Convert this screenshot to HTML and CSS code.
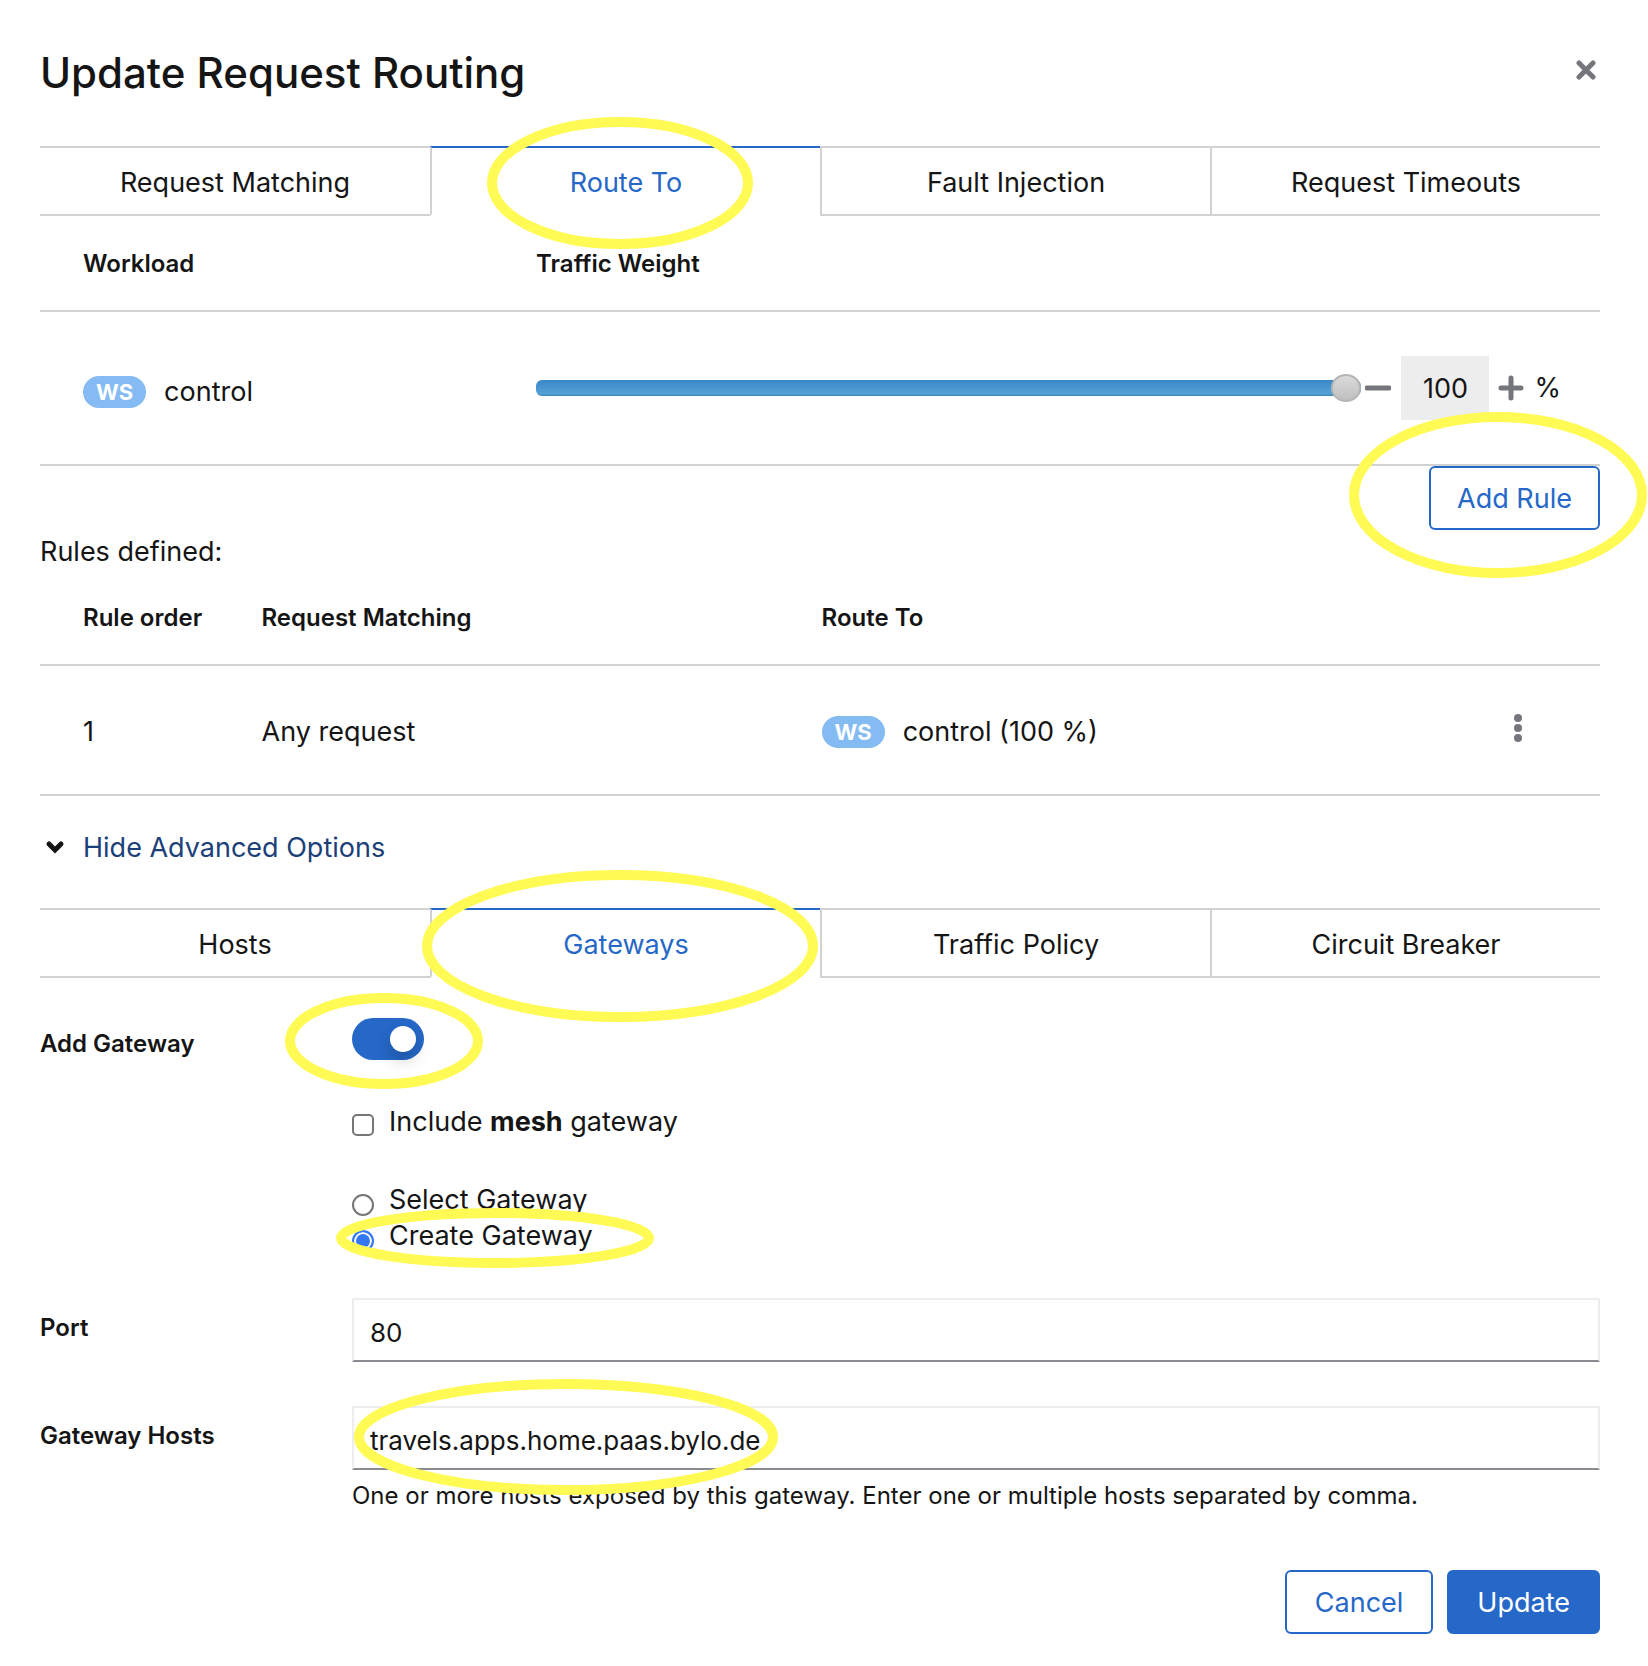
FILE: index.html
```html
<!DOCTYPE html>
<html lang="en">
<head>
<meta charset="utf-8">
<meta name="viewport" content="width=device-width, initial-scale=1">
<title>Update Request Routing</title>
<link rel="stylesheet" href="styles.css">
</head>
<body>
<main class="dialog">
  <header class="dialog-header">
    <h1 class="title">Update Request Routing</h1>
    <button class="icon-button close" type="button" aria-label="Close">
      <svg width="20" height="20" viewBox="0 0 20 20" aria-hidden="true"><path d="M3 3l14 14M17 3L3 17" stroke="currentColor" stroke-width="5" stroke-linecap="round"/></svg>
    </button>
  </header>

  <div class="tabs" role="tablist">
    <button class="tab" type="button" role="tab">Request Matching</button>
    <button class="tab active" type="button" role="tab" aria-selected="true">Route To
      <svg class="mark mark-route" width="268" height="134" aria-hidden="true"><ellipse cx="134" cy="67" rx="128" ry="61"/></svg>
    </button>
    <button class="tab" type="button" role="tab">Fault Injection</button>
    <button class="tab" type="button" role="tab">Request Timeouts</button>
  </div>

  <table class="grid weights">
    <thead>
      <tr><th class="col-workload">Workload</th><th>Traffic Weight</th></tr>
    </thead>
    <tbody>
      <tr>
        <td><span class="workload"><span class="badge">WS</span>control</span></td>
        <td>
          <div class="weight">
            <input class="slider" type="range" min="0" max="100" value="100" aria-label="Traffic weight">
            <button class="icon-button" type="button" aria-label="Decrease">
              <svg width="26" height="26" viewBox="0 0 26 26" aria-hidden="true"><path d="M2 13h22" stroke="currentColor" stroke-width="5" stroke-linecap="round"/></svg>
            </button>
            <input class="weight-value" type="text" value="100" aria-label="Weight in percent">
            <button class="icon-button" type="button" aria-label="Increase">
              <svg width="26" height="26" viewBox="0 0 26 26" aria-hidden="true"><path d="M3 13h20M13 3v20" stroke="currentColor" stroke-width="5" stroke-linecap="round"/></svg>
            </button>
            <span class="unit">%</span>
          </div>
        </td>
      </tr>
    </tbody>
  </table>

  <div class="add-row">
    <button class="button secondary add-rule" type="button">Add Rule
      <svg class="mark mark-add" width="300" height="168" aria-hidden="true"><ellipse cx="150" cy="84" rx="144" ry="78"/></svg>
    </button>
  </div>

  <p class="rules-title">Rules defined:</p>
  <table class="grid rules">
    <thead>
      <tr><th class="col-order">Rule order</th><th class="col-match">Request Matching</th><th>Route To</th><th class="col-actions"></th></tr>
    </thead>
    <tbody>
      <tr>
        <td>1</td>
        <td>Any request</td>
        <td><span class="workload"><span class="badge">WS</span>control (100 %)</span></td>
        <td>
          <button class="icon-button kebab" type="button" aria-label="Actions">
            <svg width="10" height="30" viewBox="0 0 10 30" aria-hidden="true"><circle cx="5" cy="5" r="4"/><circle cx="5" cy="15" r="4"/><circle cx="5" cy="25" r="4"/></svg>
          </button>
        </td>
      </tr>
    </tbody>
  </table>

  <button class="expander" type="button" aria-expanded="true">
    <svg width="20" height="16" viewBox="0 0 20 16" aria-hidden="true"><path d="M4 4l6 6 6-6" fill="none" stroke="currentColor" stroke-width="5" stroke-linecap="round"/></svg>
    <span class="expander-text">Hide Advanced Options</span>
  </button>

  <div class="tabs" role="tablist">
    <button class="tab" type="button" role="tab">Hosts</button>
    <button class="tab active" type="button" role="tab" aria-selected="true">Gateways
      <svg class="mark mark-gateways" width="398" height="154" aria-hidden="true"><ellipse cx="199" cy="77" rx="193" ry="71"/></svg>
    </button>
    <button class="tab" type="button" role="tab">Traffic Policy</button>
    <button class="tab" type="button" role="tab">Circuit Breaker</button>
  </div>

  <form class="form">
    <label class="form-label" for="add-gateway">Add Gateway</label>
    <div class="options">
      <div class="switch-row">
        <input class="switch" type="checkbox" role="switch" id="add-gateway" checked>
        <svg class="mark mark-switch" width="200" height="96" aria-hidden="true"><ellipse cx="100" cy="48" rx="94" ry="43"/></svg>
      </div>
      <div class="choice mesh">
        <input class="check" type="checkbox" id="mesh">
        <label for="mesh">Include <b>mesh</b> gateway</label>
      </div>
      <div class="choice">
        <input class="radio" type="radio" name="mode" id="select-gateway">
        <label for="select-gateway">Select Gateway</label>
      </div>
      <div class="choice">
        <input class="radio" type="radio" name="mode" id="create-gateway" checked>
        <label for="create-gateway">Create Gateway</label>
        <svg class="mark mark-create" width="320" height="62" aria-hidden="true"><ellipse cx="160" cy="31" rx="154" ry="25"/></svg>
      </div>
    </div>

    <label class="form-label" for="port">Port</label>
    <div class="field"><input class="text-input" type="text" id="port" value="80"></div>

    <label class="form-label" for="hosts">Gateway Hosts</label>
    <div class="field">
      <input class="text-input" type="text" id="hosts" value="travels.apps.home.paas.bylo.de">
      <p class="helper">One or more hosts exposed by this gateway. Enter one or multiple hosts separated by comma.</p>
      <svg class="mark mark-hosts" width="426" height="118" aria-hidden="true"><ellipse cx="213" cy="59" rx="207" ry="53"/></svg>
    </div>
  </form>

  <footer class="actions">
    <button class="button secondary" type="button">Cancel</button>
    <button class="button primary" type="button">Update</button>
  </footer>
</main>
</body>
</html>
```

FILE: styles.css
```css
:root {
  --text: #151515;
  --blue: #2568c8;
  --line: #d2d2d2;
  --muted: #75767b;
  --mark: #fffa54;
}

* {
  box-sizing: border-box;
}

body {
  margin: 0;
  background: #fff;
  color: var(--text);
  font: 27px/36px Inter, "Noto Sans", sans-serif;
}

button,
input {
  margin: 0;
  font: inherit;
  color: inherit;
}

button {
  border: 0;
  padding: 0;
  background: none;
}

.dialog {
  padding: 48px 48px 32px 40px;
  overflow: hidden;
}

.dialog-header {
  display: flex;
  justify-content: space-between;
  align-items: flex-start;
  height: 98px;
}

.title {
  margin: 0;
  font-size: 42px;
  font-weight: 500;
  line-height: 50px;
}

.icon-button {
  display: flex;
  align-items: center;
  justify-content: center;
  color: var(--muted);
}

.close {
  margin: 12px 4px 0 0;
}

/* Tabs */
.tabs {
  display: grid;
  grid-template-columns: repeat(4, 1fr);
}

.tab {
  position: relative;
  height: 70px;
  padding-top: 3px;
  border-top: 2px solid var(--line);
  border-bottom: 2px solid var(--line);
}

.tab + .tab {
  border-left: 2px solid var(--line);
}

.tab.active {
  border-top-color: var(--blue);
  border-bottom-color: transparent;
  color: var(--blue);
}

/* Tables */
.grid {
  width: 100%;
  table-layout: fixed;
  border-collapse: separate;
  border-spacing: 0;
}

.grid th,
.grid td {
  padding: 0;
  border-bottom: 2px solid var(--line);
  text-align: left;
}

.grid th {
  padding-top: 2px;
  font-size: 24px;
  font-weight: 600;
}

.grid th:first-child,
.grid td:first-child {
  padding-left: 43px;
}

.weights th {
  height: 96px;
}

.weights td {
  height: 154px;
}

.rules th {
  height: 96px;
}

.rules td {
  height: 130px;
  padding-top: 4px;
}

.col-workload {
  width: 31.8%;
}

.col-order {
  width: 14.2%;
}

.col-match {
  width: 35.9%;
}

.col-actions {
  width: 164px;
}

.workload {
  display: flex;
  align-items: center;
  gap: 18px;
}

.weights .workload {
  padding-top: 8px;
}

.badge {
  padding: 1px 13px 0;
  border-radius: 16px;
  background: #84bbf3;
  color: #fff;
  font-size: 22px;
  font-weight: 700;
  line-height: 31px;
}

.weight {
  display: flex;
  align-items: center;
  padding-right: 39px;
}

.slider {
  flex: 1;
  min-width: 0;
  height: 28px;
  margin-right: 4px;
  appearance: none;
  background: none;
}

.slider::-webkit-slider-runnable-track {
  height: 16px;
  border-radius: 6px;
  background: linear-gradient(#3a87c8, #55a2d8 14px, #4288bd 15px);
}

.slider::-webkit-slider-thumb {
  width: 30px;
  height: 28px;
  margin-top: -6px;
  appearance: none;
  border: 2px solid #b5b5b5;
  border-radius: 50%;
  background: linear-gradient(#dadada, #bfbfbf);
}

.weight-value {
  width: 88px;
  height: 64px;
  margin: 0 9px 0 10px;
  border: 0;
  background: #ededed;
  text-align: center;
}

.unit {
  margin-left: 10px;
}

.kebab {
  margin: 0 0 8px 77px;
  fill: var(--muted);
}

/* Buttons */
.button {
  position: relative;
  height: 64px;
  padding: 1px 28px 0;
  border: 2px solid var(--blue);
  border-radius: 6px;
}

.secondary {
  color: var(--blue);
}

.primary {
  background: var(--blue);
  color: #fff;
}

.add-rule {
  padding: 1px 26px 0;
}

.add-row {
  display: flex;
  justify-content: flex-end;
}

.rules-title {
  margin: 4px 0 0;
}

.expander {
  display: flex;
  align-items: center;
  gap: 18px;
  margin: 34px 0 42px 5px;
}

.expander-text {
  color: #1b4079;
}

/* Gateway form */
.form {
  display: grid;
  grid-template-columns: 312px 1fr;
  row-gap: 44px;
}

.form-label {
  padding-top: 12px;
  font-size: 24px;
  font-weight: 600;
}

.options {
  padding-top: 40px;
}

.form > .form-label:first-child {
  padding-top: 48px;
}

.switch-row {
  position: relative;
  display: flex;
}

.switch {
  width: 72px;
  height: 42px;
  padding: 8px;
  appearance: none;
  border-radius: 21px;
  background: var(--blue);
  display: flex;
  justify-content: flex-end;
}

.switch::before {
  content: "";
  width: 26px;
  height: 26px;
  border-radius: 50%;
  background: #fff;
  box-shadow: 0 8px 16px rgb(0 0 0 / 20%);
}

.choice {
  position: relative;
  display: flex;
  align-items: flex-start;
  gap: 15px;
}

.mesh {
  margin: 44px 0 42px;
}

.check,
.radio {
  width: 22px;
  height: 22px;
  margin-top: 10px;
  appearance: none;
  border: 2px solid #767676;
  border-radius: 5px;
}

.radio {
  margin-top: 12px;
  border-radius: 50%;
}

.radio:checked {
  border-color: #3478f6;
  background: #3478f6;
  box-shadow: inset 0 0 0 2px #fff;
}

.field {
  position: relative;
}

.text-input {
  display: block;
  width: 100%;
  height: 64px;
  padding: 4px 16px 0;
  border: 2px solid #ededed;
  border-bottom-color: #8a8b90;
  font-size: 26px;
}

.helper {
  margin: 8px 0 0;
  font-size: 24px;
}

.actions {
  display: flex;
  justify-content: flex-end;
  gap: 14px;
  margin-top: 56px;
}

/* Highlighter rings drawn over the dialog */
.mark {
  position: absolute;
  z-index: 1;
  fill: none;
  stroke: var(--mark);
  stroke-width: 10px;
  pointer-events: none;
}

.mark-route {
  top: -32px;
  left: 54px;
}

.mark-add {
  top: -57px;
  left: -83px;
}

.mark-gateways {
  top: -41px;
  left: -11px;
}

.mark-switch {
  top: -25px;
  left: -68px;
}

.mark-create {
  top: -11px;
  left: -17px;
}

.mark-hosts {
  top: -28px;
  left: 1px;
}
```
